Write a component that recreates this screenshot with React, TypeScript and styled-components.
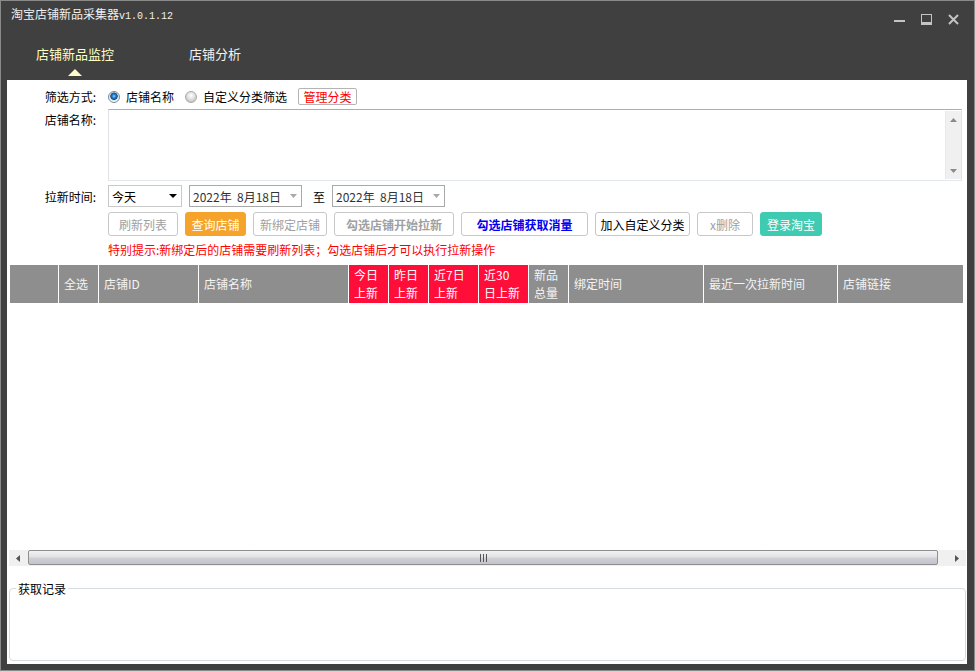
import React from 'react';
import styled, { createGlobalStyle } from 'styled-components';

const Global = createGlobalStyle`
  html, body { margin: 0; padding: 0; background: #404040; }
  body { font-family: "Noto Sans CJK SC", "Noto Sans", sans-serif; font-size: 12px; color: #000; }
  * { box-sizing: border-box; }
`;

const CJK = `"Noto Sans CJK SC", "Noto Sans", sans-serif`;

const Window = styled.div`
  width: 975px;
  height: 671px;
  border: 1px solid #8a8a8a;
  background: #404040;
  display: flex;
  flex-direction: column;
  overflow: hidden;
`;

const TitleBar = styled.div`
  height: 28px;
  flex: none;
  display: flex;
  align-items: flex-start;
  justify-content: space-between;
`;

const Title = styled.div`
  color: #f0f0f0;
  font-size: 12px;
  line-height: 16px;
  padding: 5px 0 0 10px;
`;

const Version = styled.span`
  font-family: "Liberation Mono", monospace;
  font-size: 10px;
`;

const Controls = styled.div`
  display: flex;
  gap: 16px;
  padding-top: 13px;
  margin-right: 15px;
`;

const TabBar = styled.div`
  height: 51px;
  flex: none;
  display: flex;
  align-items: flex-start;
  padding: 16px 0 0 35px;
  gap: 75px;
`;

const Tab = styled.div<{ $active?: boolean }>`
  position: relative;
  font-size: 13px;
  line-height: 18px;
  color: ${(p) => (p.$active ? '#ffffc4' : '#f2f2f2')};
  ${(p) =>
    p.$active &&
    `
    &::after {
      content: '';
      position: absolute;
      left: 50%;
      top: 24px;
      margin-left: -7px;
      border-left: 7px solid transparent;
      border-right: 7px solid transparent;
      border-bottom: 7px solid #fffbc8;
    }
  `}
`;

const Content = styled.div`
  flex: 1;
  min-height: 0;
  margin: 0 7px 6px 6px;
  background: #fff;
  display: flex;
  flex-direction: column;
  padding-top: 8px;
`;

const Row = styled.div<{ $mt?: number; $h: number; $top?: boolean }>`
  display: flex;
  align-items: ${(p) => (p.$top ? 'flex-start' : 'center')};
  height: ${(p) => p.$h}px;
  margin-top: ${(p) => p.$mt ?? 0}px;
  flex: none;
`;

const Label = styled.div<{ $pt?: number }>`
  width: 89px;
  margin-right: 12px;
  text-align: right;
  line-height: 17px;
  padding-top: ${(p) => p.$pt ?? 0}px;
  flex: none;
`;

const Radio = styled.span<{ $on?: boolean }>`
  width: 12px;
  height: 12px;
  border-radius: 50%;
  flex: none;
  border: 1px solid ${(p) => (p.$on ? '#7d8a96' : '#a8a8a8')};
  background: ${(p) =>
    p.$on
      ? 'radial-gradient(circle at 50% 42%, #9fd6ff 0, #2a86d0 1.6px, #0f4f93 3.4px, #dfe3e6 4px, #f7f7f7 5.5px)'
      : 'radial-gradient(circle at 50% 35%, #ffffff 0, #e6e6e6 3px, #c9c9c9 6px)'};
`;

const RadioText = styled.span<{ $mr?: number }>`
  margin-left: 6px;
  margin-right: ${(p) => p.$mr ?? 0}px;
  line-height: 17px;
`;

const TagButton = styled.span`
  height: 17px;
  width: 59px;
  border: 1px solid #b4b4b4;
  border-radius: 2px;
  color: #ff0000;
  line-height: 15px;
  text-align: center;
  font-size: 12px;
`;

const TextBox = styled.div`
  width: 854px;
  height: 72px;
  border: 1px solid;
  border-color: #abadb3 #dfe3e8 #e3e9ef #dfe3e8;
  display: flex;
`;

const TextInput = styled.textarea`
  flex: 1;
  border: none;
  outline: none;
  resize: none;
  padding: 2px 4px;
  font-family: ${CJK};
  font-size: 12px;
  background: #fff;
`;

const VScroll = styled.div`
  width: 16px;
  flex: none;
  background: #f0f0f0;
  border-left: 1px solid #e8e8e8;
  margin: 1px 0;
  display: flex;
  flex-direction: column;
  justify-content: space-between;
  align-items: center;
  padding: 7px 0 6px;
`;

const Select = styled.div<{ $w: number; $border: string }>`
  width: ${(p) => p.$w}px;
  height: 22px;
  border: 1px solid ${(p) => p.$border};
  display: flex;
  align-items: center;
  justify-content: space-between;
  padding: 0 4px 0 3px;
  flex: none;
  background: #fff;
`;

const SelectText = styled.span<{ $color?: string }>`
  color: ${(p) => p.$color ?? '#000'};
  white-space: pre;
  line-height: 17px;
`;

const To = styled.span`
  margin: 0 7px 0 11px;
  line-height: 17px;
`;

const ButtonRow = styled.div`
  display: flex;
  gap: 7px;
`;

type Variant = 'disabled' | 'orange' | 'blue' | 'normal' | 'teal';

const Btn = styled.button<{ $w: number; $v: Variant; $bold?: boolean }>`
  width: ${(p) => p.$w}px;
  height: 24px;
  padding: 0;
  font-family: ${CJK};
  font-size: 12px;
  font-weight: ${(p) => (p.$bold ? 700 : 400)};
  border-radius: 3px;
  border: 1px solid
    ${(p) => (p.$v === 'orange' ? '#f5a32a' : p.$v === 'teal' ? '#3fcbb1' : '#c7c7c7')};
  background: ${(p) => (p.$v === 'orange' ? '#f5a32a' : p.$v === 'teal' ? '#3fcbb1' : '#fff')};
  color: ${(p) =>
    p.$v === 'orange' || p.$v === 'teal'
      ? '#ffffff'
      : p.$v === 'blue'
      ? '#0000f0'
      : p.$v === 'normal'
      ? '#000'
      : '#a0a0a0'};
  flex: none;
`;

const Notice = styled.div`
  color: #ff0000;
  line-height: 17px;
  margin-left: 101px;
  margin-top: 5px;
  flex: none;
`;

const Grid = styled.div`
  flex: 1;
  min-height: 0;
  display: flex;
  flex-direction: column;
  margin-top: 7px;
`;

const Header = styled.div`
  display: flex;
  height: 38px;
  margin-left: 3px;
  flex: none;
`;

const HeadCell = styled.div<{ $w: number; $red?: boolean; $first?: boolean }>`
  width: ${(p) => p.$w}px;
  flex: none;
  background: ${(p) => (p.$red ? '#fe0e38' : '#8e8e8e')};
  color: ${(p) => (p.$red ? '#ffffff' : '#f4f4f4')};
  border-left: ${(p) => (p.$first ? 'none' : '1px solid #fff')};
  display: flex;
  align-items: center;
  padding-left: 5px;
  line-height: 18px;
`;

const Body = styled.div`
  flex: 1;
  background: #fff;
`;

const HScroll = styled.div`
  height: 16px;
  flex: none;
  margin: 0 1px 0 2px;
  background: #f0f0f0;
  display: flex;
`;

const ScrollBtn = styled.div`
  width: 18px;
  flex: none;
  display: flex;
  align-items: center;
  justify-content: center;
`;

const Thumb = styled.div`
  flex: 1;
  margin: 0 10px 1px 1px;
  border: 1px solid #8f8f8f;
  border-radius: 2px;
  background: linear-gradient(#f2f2f4, #e2e2e6 45%, #cfd0d5 55%, #c3c4ca);
  display: flex;
  align-items: center;
  justify-content: center;
`;

const Group = styled.fieldset`
  margin: 14px 1px 3px 2px;
  padding: 0;
  min-width: 0;
  height: 81px;
  flex: none;
  border: 1px solid #d5dbe1;
  border-radius: 4px;
`;

const Legend = styled.legend`
  margin-left: 6px;
  padding: 0 2px;
  font-size: 12px;
  line-height: 17px;
`;

const Arrow = ({ dir, color, w = 7, h = 4 }: { dir: 'up' | 'down' | 'left' | 'right'; color: string; w?: number; h?: number }) => {
  const pts =
    dir === 'down'
      ? `0,0 ${w},0 ${w / 2},${h}`
      : dir === 'up'
      ? `0,${h} ${w},${h} ${w / 2},0`
      : dir === 'left'
      ? `${h},0 ${h},${w} 0,${w / 2}`
      : `0,0 0,${w} ${h},${w / 2}`;
  const vw = dir === 'left' || dir === 'right' ? h : w;
  const vh = dir === 'left' || dir === 'right' ? w : h;
  return (
    <svg width={vw} height={vh} viewBox={`0 0 ${vw} ${vh}`}>
      <polygon points={pts} fill={color} />
    </svg>
  );
};

const MinIcon = () => (
  <svg width="11" height="11" viewBox="0 0 11 11">
    <rect x="0" y="6" width="11" height="2" fill="#c4c4c4" />
  </svg>
);
const MaxIcon = () => (
  <svg width="11" height="11" viewBox="0 0 11 11">
    <rect x="0.5" y="0.5" width="10" height="10" fill="none" stroke="#c4c4c4" />
    <rect x="0" y="8" width="11" height="3" fill="#c4c4c4" />
  </svg>
);
const CloseIcon = () => (
  <svg width="11" height="11" viewBox="0 0 11 11">
    <path d="M1 1 L10 10 M10 1 L1 10" stroke="#c4c4c4" strokeWidth="2" />
  </svg>
);

const Grip = () => (
  <svg width="7" height="8" viewBox="0 0 7 8">
    <rect x="0" y="0" width="1" height="8" fill="#555" />
    <rect x="3" y="0" width="1" height="8" fill="#555" />
    <rect x="6" y="0" width="1" height="8" fill="#555" />
  </svg>
);

const columns: { label: React.ReactNode; w: number; red?: boolean }[] = [
  { label: '', w: 48 },
  { label: '全选', w: 40 },
  { label: '店铺ID', w: 100 },
  { label: '店铺名称', w: 150 },
  { label: <>今日<br />上新</>, w: 40, red: true },
  { label: <>昨日<br />上新</>, w: 40, red: true },
  { label: <>近7日<br />上新</>, w: 50, red: true },
  { label: <>近30<br />日上新</>, w: 50, red: true },
  { label: <>新品<br />总量</>, w: 40 },
  { label: '绑定时间', w: 135 },
  { label: '最近一次拉新时间', w: 134 },
  { label: '店铺链接', w: 126 },
];

const buttons: { text: string; w: number; v: Variant; bold?: boolean }[] = [
  { text: '刷新列表', w: 70, v: 'disabled' },
  { text: '查询店铺', w: 61, v: 'orange' },
  { text: '新绑定店铺', w: 74, v: 'disabled' },
  { text: '勾选店铺开始拉新', w: 120, v: 'disabled', bold: true },
  { text: '勾选店铺获取消量', w: 127, v: 'blue', bold: true },
  { text: '加入自定义分类', w: 95, v: 'normal' },
  { text: 'x删除', w: 56, v: 'disabled' },
  { text: '登录淘宝', w: 62, v: 'teal' },
];

export default function App() {
  return (
    <>
      <Global />
      <Window>
        <TitleBar>
          <Title>
            淘宝店铺新品采集器<Version>v1.0.1.12</Version>
          </Title>
          <Controls>
            <MinIcon />
            <MaxIcon />
            <CloseIcon />
          </Controls>
        </TitleBar>
        <TabBar>
          <Tab $active>店铺新品监控</Tab>
          <Tab>店铺分析</Tab>
        </TabBar>
        <Content>
          <Row $h={17}>
            <Label>筛选方式:</Label>
            <Radio $on />
            <RadioText $mr={11}>店铺名称</RadioText>
            <Radio />
            <RadioText $mr={11}>自定义分类筛选</RadioText>
            <TagButton>管理分类</TagButton>
          </Row>
          <Row $h={72} $mt={4} $top>
            <Label $pt={2}>店铺名称:</Label>
            <TextBox>
              <TextInput />
              <VScroll>
                <Arrow dir="up" color="#8a8a8a" />
                <Arrow dir="down" color="#8a8a8a" />
              </VScroll>
            </TextBox>
          </Row>
          <Row $h={22} $mt={4}>
            <Label>拉新时间:</Label>
            <Select $w={74} $border="#c9c9c9">
              <SelectText>今天</SelectText>
              <Arrow dir="down" color="#000" w={8} h={4} />
            </Select>
            <Select $w={113} $border="#a9a9a9" style={{ marginLeft: 7 }}>
              <SelectText $color="#333">2022年  8月18日</SelectText>
              <Arrow dir="down" color="#a8a8a8" />
            </Select>
            <To>至</To>
            <Select $w={113} $border="#a9a9a9">
              <SelectText $color="#333">2022年  8月18日</SelectText>
              <Arrow dir="down" color="#a8a8a8" />
            </Select>
          </Row>
          <Row $h={24} $mt={5}>
            <Label />
            <ButtonRow>
              {buttons.map((b) => (
                <Btn key={b.text} $w={b.w} $v={b.v} $bold={b.bold}>
                  {b.text}
                </Btn>
              ))}
            </ButtonRow>
          </Row>
          <Notice>特别提示:新绑定后的店铺需要刷新列表；勾选店铺后才可以执行拉新操作</Notice>
          <Grid>
            <Header>
              {columns.map((c, i) => (
                <HeadCell key={i} $w={c.w} $red={c.red} $first={i === 0}>
                  <span>{c.label}</span>
                </HeadCell>
              ))}
            </Header>
            <Body />
            <HScroll>
              <ScrollBtn>
                <Arrow dir="left" color="#555" />
              </ScrollBtn>
              <Thumb>
                <Grip />
              </Thumb>
              <ScrollBtn>
                <Arrow dir="right" color="#555" />
              </ScrollBtn>
            </HScroll>
          </Grid>
          <Group>
            <Legend>获取记录</Legend>
          </Group>
        </Content>
      </Window>
    </>
  );
}
